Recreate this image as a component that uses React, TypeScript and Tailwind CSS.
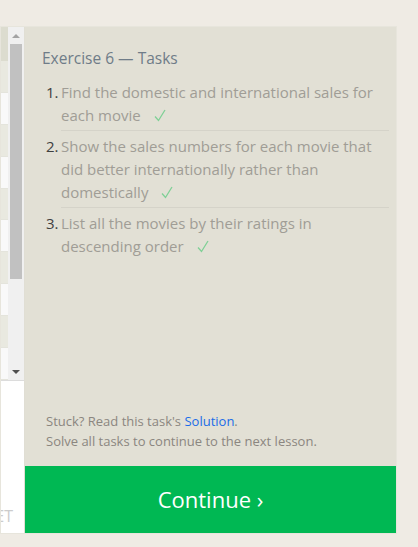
import React from 'react';

const tasks = [
  'Find the domestic and international sales for each movie',
  'Show the sales numbers for each movie that did better internationally rather than domestically',
  'List all the movies by their ratings in descending order',
];

const rows = Array.from({ length: 10 }, (_, i) => i);

const Check = () => (
  <svg width="12" height="13" viewBox="0 0 12 13" className="inline-block ml-[13px] align-[-1px]">
    <path d="M1 7.5 L4.5 11.5 L11 1" fill="none" stroke="#7fd096" strokeWidth="1.3" />
  </svg>
);

export default function App() {
  return (
    <div className="w-[418px] h-[547px] overflow-hidden bg-[#efebe4] pt-[26px] font-['Open_Sans',sans-serif]">
      <div className="flex w-[397px] h-[508px] border border-[#e7e5dc]">
        {/* left table stub */}
        <div className="w-[24px] flex flex-col bg-white border-r border-[#e0ded4]">
          <div className="flex h-[354px] border-b border-[#dcdcdc]">
            <div className="w-[7px] flex flex-col">
              <div className="h-[34px] bg-[#dcdccf]" />
              {rows.map((i) => (
                <div key={i} className={`h-[32px] border-b border-[#e4e4dc] ${i % 2 === 0 ? 'bg-[#e9e9e0]' : 'bg-[#f9f9f9]'}`} />
              ))}
            </div>
            <div className="w-[16px] flex flex-col bg-[#f0f0f0]">
              <div className="h-[17px] flex items-center justify-center">
                <div className="w-0 h-0 border-x-[4px] border-x-transparent border-b-[4px] border-b-[#a3a3a3]" />
              </div>
              <div className="mx-[2px] h-[235px] bg-[#c1c1c1]" />
              <div className="flex-1" />
              <div className="h-[17px] flex items-center justify-center">
                <div className="w-0 h-0 border-x-[4px] border-x-transparent border-t-[4px] border-t-[#505050]" />
              </div>
            </div>
          </div>
          <div className="flex-1 flex items-end justify-end overflow-hidden pr-[11px] pb-[6px]">
            <span className="text-[16px] leading-[22px] text-[#cccccc] whitespace-nowrap">RESET</span>
          </div>
        </div>

        {/* tasks panel */}
        <div className="flex-1 flex flex-col bg-[#e2e0d5]">
          <div className="flex-1 pl-[17px] pr-[7px] pt-[20px]">
            <h2 className="text-[15.5px] leading-[22px] text-[#6f7c88]">Exercise 6 — Tasks</h2>
            <ol className="mt-[12px]">
              {tasks.map((t, i) => (
                <li key={i} className="flex">
                  <span className="w-[19px] pl-[4px] text-[15px] leading-[23px] text-[#3f3f3f]">{i + 1}.</span>
                  <div className={`flex-1 pb-[3px] mb-[4px] text-[15px] leading-[23px] text-[#a09d96] ${i < tasks.length - 1 ? 'border-b border-[#d5d3c9]' : ''}`}>
                    {t}
                    <Check />
                  </div>
                </li>
              ))}
            </ol>
          </div>
          <div className="pl-[21px] pb-[15px] text-[13px] leading-[20px] text-[#8b8680]">
            <p>
              Stuck? Read this task's <span className="text-[#1a6ce8]">Solution</span>.
            </p>
            <p>Solve all tasks to continue to the next lesson.</p>
          </div>
          <button className="h-[67px] bg-[#00b853] text-white text-[22px] flex items-center justify-center">
            Continue ›
          </button>
        </div>
      </div>
    </div>
  );
}
